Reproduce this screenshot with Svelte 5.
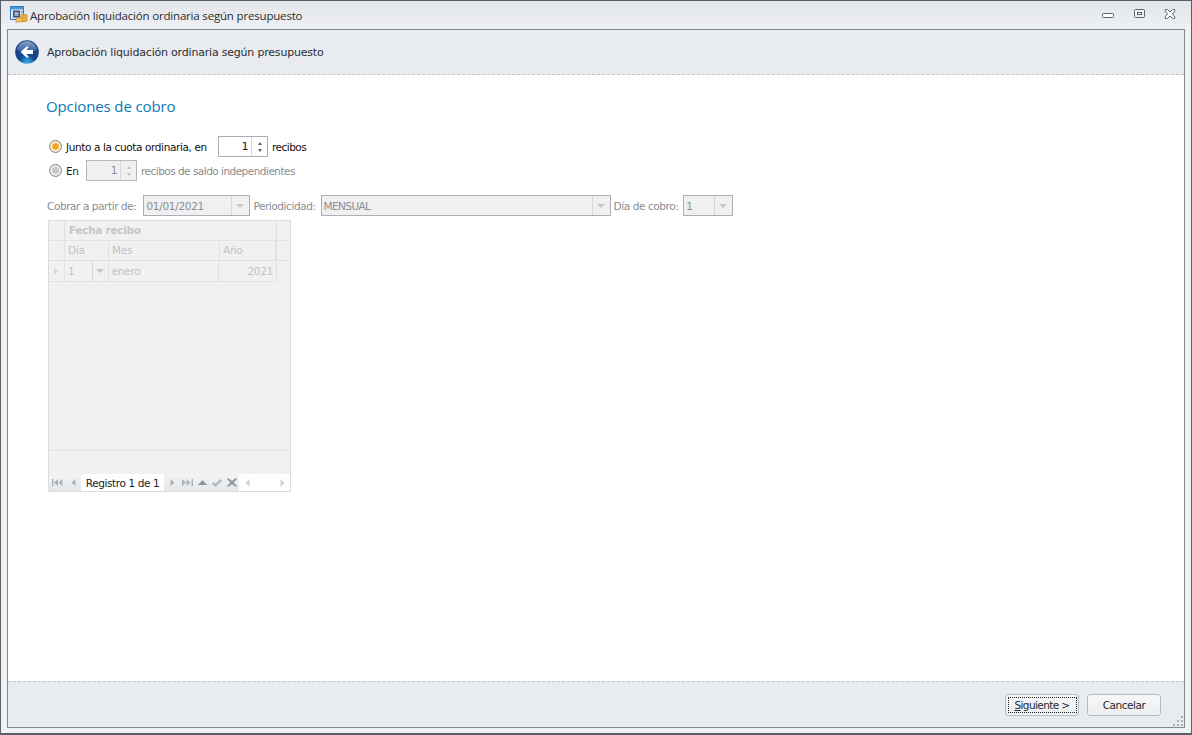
<script>
	const gripDots = [[8, 0], [4, 4], [8, 4], [0, 8], [4, 8], [8, 8]];
</script>

<div class="window">
	<div class="titlebar">
		<svg class="appicon" width="18" height="18" viewBox="0 0 18 18">
			<rect x="0.5" y="0.5" width="13" height="13" fill="#dbe8f6" stroke="#2f7fc0" />
			<rect x="1" y="1" width="12" height="2.500" fill="#4f98d6" />
			<rect x="3" y="4.500" width="7" height="7" fill="#47536e" />
			<rect x="4.500" y="6" width="4" height="4" fill="#9fb2cc" />
			<rect x="11" y="5" width="2" height="2" fill="#7fa6cf" />
			<rect x="11" y="8.500" width="6" height="7" rx="1" fill="#f2a93b" stroke="#c08424" stroke-width="0.7" />
			<rect x="6" y="12" width="6" height="4" fill="#f3c66f" stroke="#c08424" stroke-width="0.6" />
		</svg>
		<span class="wintitle">Aprobación liquidación ordinaria según presupuesto</span>
		<div class="winbtns">
			<svg width="12" height="10" viewBox="0 0 12 10"><rect x="0.500" y="4.500" width="11" height="4" rx="1" fill="#fff" stroke="#5b6672" /></svg>
			<svg width="12" height="10" viewBox="0 0 12 10"><rect x="1.500" y="0.500" width="10" height="8" rx="1" fill="#eef0f3" stroke="#5b6672" /><rect x="4.500" y="3.500" width="4" height="2" fill="#fff" stroke="#5b6672" /></svg>
			<svg width="12" height="10" viewBox="0 0 12 10"><path d="M1.500 .5h2l2.500 2.500 2.500-2.500h2l.5 1.500-2.500 3 2.500 3-.5 1.500h-2L6 7 3.500 9.500h-2L1 8l2.500-3L1 2z" fill="#fff" stroke="#5b6672" /></svg>
		</div>
	</div>

	<div class="frame">
		<header class="head">
			<svg class="back" width="24" height="24" viewBox="0 0 24 24">
				<defs>
					<radialGradient id="orb" cx="50%" cy="95%" r="75%">
						<stop offset="0" stop-color="#35b6ee" />
						<stop offset="0.45" stop-color="#12488f" />
						<stop offset="1" stop-color="#1b3f7e" />
					</radialGradient>
					<linearGradient id="gloss" x1="0" y1="0" x2="0" y2="1">
						<stop offset="0" stop-color="#b7cbe6" />
						<stop offset="1" stop-color="#3e6cab" />
					</linearGradient>
				</defs>
				<circle cx="12" cy="12" r="11.800" fill="url(#orb)" />
				<path d="M2 10a10 9 0 0 1 20 0c-4 2-16 2-20 0z" fill="url(#gloss)" opacity="0.7" />
				<path d="M5.500 12 11.500 6.500h2.500l-2.500 3.500h6.500v4h-6.500l2.500 3.500h-2.500z" fill="#fff" />
			</svg>
			<span class="headtitle">Aprobación liquidación ordinaria según presupuesto</span>
		</header>

		<main class="content">
			<h1>Opciones de cobro</h1>

			<div class="row r1">
				<span class="radio on"></span>
				<span class="lbl first">Junto a la cuota ordinaria, en</span>
				<div class="spin">
					<span class="val">1</span>
					<span class="spinbtns"><i class="up"></i><i class="down"></i></span>
				</div>
				<span class="lbl after">recibos</span>
			</div>
			<div class="row r2">
				<span class="radio"></span>
				<span class="lbl en">En</span>
				<div class="spin dis">
					<span class="val">1</span>
					<span class="spinbtns"><i class="up"></i><i class="down"></i></span>
				</div>
				<span class="lbl after muted">recibos de saldo independientes</span>
			</div>

			<div class="row r3">
				<span class="lbl muted">Cobrar a partir de:</span>
				<div class="combo c-date"><span>01/01/2021</span><b></b></div>
				<span class="lbl muted">Periodicidad:</span>
				<div class="combo c-per"><span class="mens">MENSUAL</span><b></b></div>
				<span class="lbl muted">Día de cobro:</span>
				<div class="combo c-day"><span>1</span><b></b></div>
			</div>

			<div class="grid">
				<div class="gband">
					<div class="gind"></div>
					<div class="gbandname">Fecha recibo</div>
					<div class="gend"></div>
				</div>
				<div class="gcols">
					<div class="gind"></div>
					<div class="gc c1">Día</div>
					<div class="gc c2">Mes</div>
					<div class="gc c3">Año</div>
					<div class="gend"></div>
				</div>
				<div class="grow">
					<div class="gind"><svg width="5" height="7" viewBox="0 0 5 7"><path d="M0 0l4 3.500L0 7z" fill="#d4d6d8" /></svg></div>
					<div class="gc c1 cellday"><span>1</span><b></b></div>
					<div class="gc c2">enero</div>
					<div class="gc c3 num">2021</div>
				</div>
				<div class="gbody"></div>
				<div class="gfoot"></div>
				<div class="gnav">
					<div class="navbtns">
						<svg width="11" height="7" viewBox="0 0 11 7"><path d="M0 0h1.500v7H0zM6 0v7L2 3.500zM10.500 0v7l-4-3.500z" fill="#aeb2b6" /></svg>
						<svg width="5" height="7" viewBox="0 0 5 7"><path d="M4.500 0v7L.5 3.500z" fill="#aeb2b6" /></svg>
					</div>
					<span class="navtxt">Registro 1 de 1</span>
					<div class="navbtns second">
						<svg width="5" height="7" viewBox="0 0 5 7"><path d="M.5 0v7l4-3.500z" fill="#aeb2b6" /></svg>
						<svg class="ff" width="11" height="7" viewBox="0 0 11 7"><path d="M0 0v7l4-3.500zM4.500 0v7l4-3.500zM9.500 0H11v7H9.500z" fill="#aeb2b6" /></svg>
						<svg width="9" height="5" viewBox="0 0 9 5"><path d="M4.500 0 9 5H0z" fill="#8f9499" /></svg>
						<svg width="10" height="8" viewBox="0 0 10 8"><path d="M0 4.500 1.500 3 3.500 5 8.500 0 10 1.500 3.500 8z" fill="#aeb2b6" /></svg>
						<svg width="10" height="9" viewBox="0 0 10 9"><path d="M0 1 1.200 0 5 3 8.800 0 10 1 6.500 4.500 10 8 8.800 9 5 6 1.200 9 0 8 3.500 4.500z" fill="#8f9499" /></svg>
					</div>
					<div class="navscroll">
						<svg width="5" height="8" viewBox="0 0 5 8"><path d="M4.500 0v8L.5 4z" fill="#d0d2d4" /></svg>
						<svg width="5" height="8" viewBox="0 0 5 8"><path d="M.5 0v8l4-4z" fill="#d0d2d4" /></svg>
					</div>
				</div>
			</div>
		</main>

		<footer class="foot">
			<button class="btn focus"><span class="dots"><u>S</u>iguiente &gt;</span></button>
			<button class="btn cancel">Cancelar</button>
			<svg class="grip" width="11" height="11" viewBox="0 0 11 11">
				{#each gripDots as [x, y]}
					<rect {x} {y} width="2" height="2" fill="#a9afb6" />
				{/each}
			</svg>
		</footer>
	</div>
</div>

<style>
	:global(body) {
		margin: 0;
		background: #eceef1;
	}

	.window {
		box-sizing: border-box;
		width: 1192px;
		height: 735px;
		display: flex;
		flex-direction: column;
		border: 1px solid #596069;
		border-bottom-width: 2px;
		padding: 0 6px 5px 6px;
		background: linear-gradient(#e3e6ea, #eff1f3 30px, #eff1f3);
		font-family: Tahoma, "DejaVu Sans", sans-serif;
		font-size: 11px;
		color: #1e1e1e;
	}

	.titlebar {
		height: 28px;
		display: flex;
		align-items: center;
		flex-shrink: 0;
		position: relative;
	}

	.appicon {
		margin-left: 3px;
		margin-right: 2px;
	}

	.wintitle {
		font-family: "Open Sans", sans-serif;
		font-size: 11.500px;
		letter-spacing: -0.180px;
		color: #2a2d31;
	}

	.winbtns {
		margin-left: auto;
		display: flex;
		align-items: center;
		gap: 19px;
		margin-right: 9px;
		margin-top: -3px;
	}

	.frame {
		flex: 1;
		display: flex;
		flex-direction: column;
		border: 1px solid #7e8890;
		background: #fff;
		min-height: 0;
	}

	.head {
		height: 44px;
		flex-shrink: 0;
		display: flex;
		align-items: center;
		background: #e8ebef;
		border-bottom: 1px dashed #c3c8ce;
		box-sizing: content-box;
		padding-left: 7px;
	}

	.back {
		margin-right: 8px;
	}

	.headtitle {
		font-family: "DejaVu Sans", sans-serif;
		font-size: 11px;
		color: #2d3034;
		letter-spacing: -0.200px;
	}

	.content {
		flex: 1;
		min-height: 0;
		padding: 0 0 0 39px;
		font-family: "DejaVu Sans", sans-serif;
		font-size: 10.500px;
		letter-spacing: -0.350px;
	}

	h1 {
		margin: 23px 0 0 -1px;
		height: 17px;
		line-height: 17px;
		font-family: "Open Sans", sans-serif;
		font-weight: 400;
		font-size: 15px;
		letter-spacing: -0.130px;
		color: #0f78b8;
	}

	.row {
		display: flex;
		align-items: center;
	}

	.r1 {
		margin-top: 21px;
		height: 21px;
		padding-left: 2px;
		color: #111;
	}

	.r2 {
		margin-top: 3px;
		height: 21px;
		padding-left: 2px;
	}

	.r3 {
		margin-top: 14px;
		height: 21px;
		letter-spacing: -0.420px;
	}

	.radio {
		box-sizing: border-box;
		width: 13px;
		height: 13px;
		border-radius: 50%;
		border: 1px solid #85898e;
		background: radial-gradient(circle, #c4c6c8 0 2.500px, #d6d7d8 3.500px, #f4f4f4 4.500px, #c9cbcd 6px);
		flex-shrink: 0;
	}

	.radio.on {
		border-color: #8a8471;
		background: radial-gradient(circle, #f0a51f 0 2.500px, #f6cf7e 3.500px, #f8f5ee 4.500px, #dcd8cc 6px);
	}

	.lbl {
		white-space: nowrap;
	}

	.first {
		margin-left: 4px;
		width: 152px;
		letter-spacing: -0.380px;
	}

	.en {
		margin-left: 4px;
		width: 20px;
	}

	.after {
		margin-left: 4px;
		letter-spacing: -0.520px;
	}

	.muted {
		color: #8a8d90;
	}

	.spin {
		box-sizing: border-box;
		width: 50px;
		height: 21px;
		display: flex;
		border: 1px solid #abadb3;
		background: #fff;
	}

	.spin .val {
		flex: 1;
		text-align: right;
		padding-right: 3px;
		line-height: 19px;
	}

	.spinbtns {
		width: 15px;
		border-left: 1px solid #d3d5d8;
		display: flex;
		flex-direction: column;
		align-items: center;
		justify-content: center;
		gap: 4px;
	}

	.spinbtns i {
		width: 0;
		height: 0;
		border-left: 2.500px solid transparent;
		border-right: 2.500px solid transparent;
	}

	.spinbtns .up {
		border-bottom: 3px solid #5c6064;
	}

	.spinbtns .down {
		border-top: 3px solid #5c6064;
	}

	.spin.dis {
		width: 51px;
		background: #f0f0f0;
		color: #8a8d90;
		border-color: #b4b7bb;
	}

	.spin.dis .up {
		border-bottom-color: #c2c4c6;
	}

	.spin.dis .down {
		border-top-color: #c2c4c6;
	}

	.combo {
		box-sizing: border-box;
		height: 21px;
		display: flex;
		align-items: center;
		border: 1px solid #abb0b6;
		background: #f0f0f0;
		color: #8a8d90;
		padding-left: 2px;
		flex-shrink: 0;
	}

	.combo span {
		flex: 1;
		letter-spacing: -0.300px;
	}

	.combo .mens {
		letter-spacing: -0.600px;
	}

	.combo b,
	.cellday b {
		width: 17px;
		height: 19px;
		border-left: 1px solid #d5d7d9;
		position: relative;
		flex-shrink: 0;
	}

	.combo b::after,
	.cellday b::after {
		content: "";
		position: absolute;
		left: 4px;
		top: 8px;
		border-left: 4px solid transparent;
		border-right: 4px solid transparent;
		border-top: 4px solid #c3c5c8;
	}

	.c-date {
		width: 107px;
		margin-left: 7px;
		margin-right: 3px;
	}

	.c-per {
		width: 290px;
		margin-left: 5px;
		margin-right: 3px;
	}

	.c-day {
		width: 50px;
		margin-left: 5px;
	}

	.grid {
		box-sizing: border-box;
		margin-top: 4px;
		margin-left: 1px;
		width: 243px;
		height: 272px;
		border: 1px solid #dcdcdc;
		background: #f1f1f1;
		display: flex;
		flex-direction: column;
		color: #c0c2c4;
	}

	.gband,
	.gcols,
	.grow {
		display: flex;
		height: 19px;
		flex-shrink: 0;
		border-bottom: 1px solid #e2e2e2;
	}

	.grow {
		height: 20px;
	}

	.gind {
		width: 15px;
		border-right: 1px solid #e2e2e2;
		display: flex;
		align-items: center;
		justify-content: center;
		flex-shrink: 0;
	}

	.gbandname {
		flex: 1;
		padding-left: 4px;
		line-height: 19px;
		font-weight: 700;
		color: #c4c6c8;
		letter-spacing: -0.300px;
	}

	.gend {
		width: 13px;
		border-left: 1px solid #e2e2e2;
	}

	.gc {
		box-sizing: border-box;
		padding: 0 3px;
		line-height: 19px;
		border-right: 1px solid #e2e2e2;
		letter-spacing: -0.300px;
	}

	.grow .gc {
		line-height: 20px;
	}

	.c1 {
		width: 44px;
	}

	.c2 {
		width: 111px;
	}

	.c3 {
		flex: 1;
	}

	.grow {
		width: 228px;
	}

	.grow .c3 {
		width: 58px;
		flex: none;
	}

	.num {
		text-align: right;
		padding-right: 3px;
	}

	.cellday {
		display: flex;
		align-items: center;
		padding-right: 0;
	}

	.cellday span {
		flex: 1;
	}

	.cellday b {
		width: 15px;
		height: 20px;
		border-right: none;
	}

	.cellday b::after {
		left: 3px;
	}

	.gbody {
		flex: 1;
		border-bottom: 1px solid #e2e2e2;
	}

	.gfoot {
		height: 23px;
		flex-shrink: 0;
	}

	.gnav {
		height: 17px;
		flex-shrink: 0;
		display: flex;
		align-items: center;
		background: linear-gradient(#f2f3f4, #e4e7ea);
	}

	.navbtns {
		display: flex;
		align-items: center;
		gap: 8px;
		padding-left: 3px;
		width: 32px;
		box-sizing: border-box;
	}

	.navtxt {
		background: #fff;
		width: 83px;
		height: 17px;
		line-height: 19px;
		text-align: center;
		color: #222;
		font-size: 10.500px;
		letter-spacing: -0.400px;
		flex-shrink: 0;
		overflow: hidden;
	}

	.navbtns.second {
		width: 75px;
		padding-left: 6px;
		gap: 5px;
	}

	.ff {
		margin-left: 2px;
	}

	.navscroll {
		flex: 1;
		align-self: stretch;
		background: #fff;
		display: flex;
		align-items: center;
		justify-content: space-between;
		padding: 0 5px 0 6px;
	}

	.foot {
		box-sizing: border-box;
		height: 46px;
		flex-shrink: 0;
		display: flex;
		align-items: flex-start;
		justify-content: flex-end;
		gap: 8px;
		background: #e8ebef;
		border-top: 1px dashed #c3c8ce;
		padding: 12px 23px 0 0;
		position: relative;
	}

	.btn {
		box-sizing: border-box;
		width: 74px;
		height: 22px;
		padding: 0;
		border: 1px solid #b9bdc2;
		border-radius: 3px;
		background: linear-gradient(#f6f7f8, #eceef0);
		font-family: "DejaVu Sans", sans-serif;
		font-size: 10.500px;
		letter-spacing: -0.450px;
		color: #26292c;
		display: flex;
		align-items: center;
		justify-content: center;
	}

	.focus {
		letter-spacing: -0.600px;
	}

	.dots {
		box-sizing: border-box;
		width: 69px;
		height: 16px;
		line-height: 14px;
		border: 1px dotted #222;
		text-align: center;
		display: block;
	}

	.grip {
		position: absolute;
		right: 0;
		bottom: 0;
	}
</style>
